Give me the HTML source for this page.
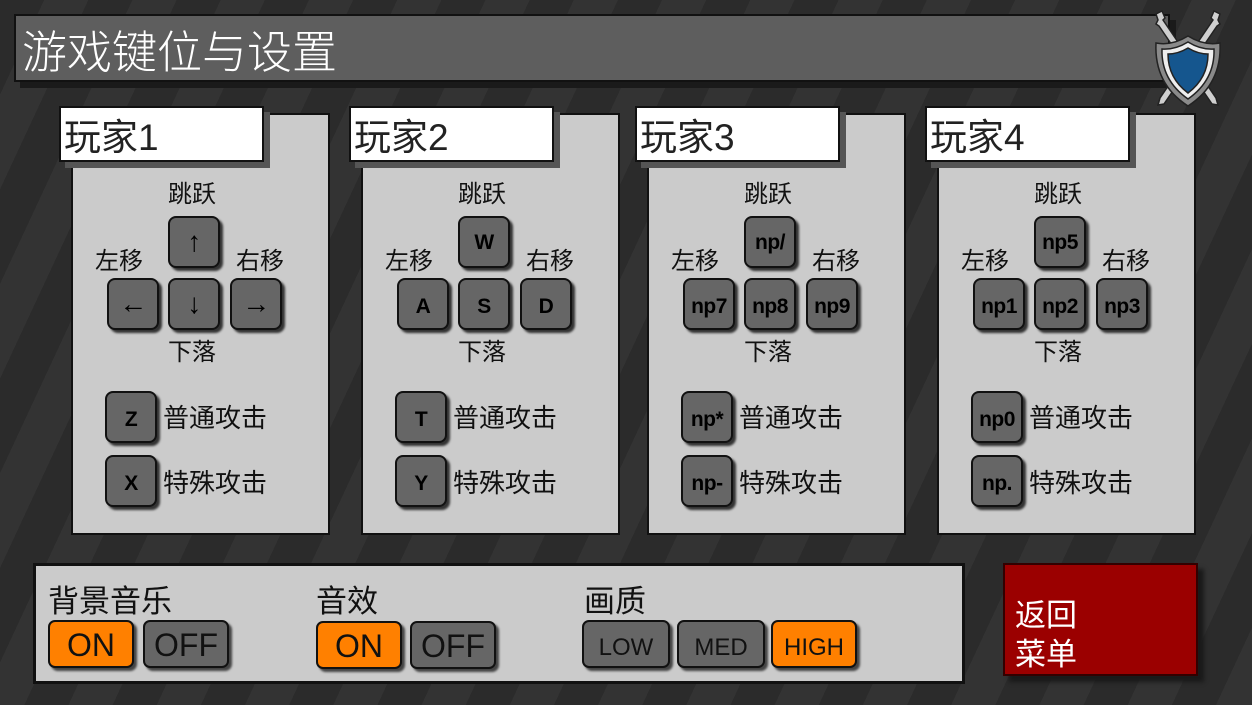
<!DOCTYPE html>
<html><head><meta charset="utf-8"><style>
*{margin:0;padding:0;box-sizing:border-box}
body{width:1252px;height:705px;overflow:hidden;position:relative;font-family:"Liberation Sans","Noto Sans CJK SC",sans-serif;
background:repeating-linear-gradient(115deg,#2b2b2b 0 40px,#333 40px 80px);}
.a{position:absolute}
.title{left:14px;top:14px;width:1156px;height:68px;background:#5e5e5e;border:2px solid #111;box-shadow:6px 6px 0 #1a1a1a;color:#fff;font-size:45px;line-height:74px;padding-left:6px;font-weight:300}
.pw{position:absolute;top:0;left:0;width:400px;height:560px}
.panel{left:71px;top:113px;width:259px;height:422px;background:#cbcbcb;border:2px solid #111}
.lbl{left:59px;top:106px;width:205px;height:56px;background:#fff;border:2px solid #111;box-shadow:6px 6px 0 #555;font-size:37px;line-height:60px;padding-left:3px;color:#222}
.t{font-size:24px;color:#111;line-height:26px}
.k{width:52px;height:52px;background:#666;border:2px solid #111;border-radius:8px;box-shadow:3px 3px 2px #333;font-weight:bold;font-size:21px;color:#000;text-align:center;line-height:54px;letter-spacing:-0.5px;white-space:nowrap;overflow:hidden}
.ar{font-size:28px;line-height:48px}
.bot{left:33px;top:563px;width:932px;height:121px;background:#cbcbcb;border:3px solid #111}
.b{height:48px;border:2px solid #111;border-radius:7px;box-shadow:3px 3px 2px #444;text-align:center;font-size:32px;line-height:46px;color:#111}
.on{background:#ff8000}.off{background:#666}
.s{font-size:26px;line-height:28px}
</style></head><body>
<div class="a title">游戏键位与设置</div>
<svg class="a" style="left:1146px;top:6px" width="84" height="104" viewBox="0 0 84 104">
<g stroke="#222" stroke-width="1.5">
<path d="M10 8 L16 5 L19 12 L17 14 L70 92 L72 99 L66 98 L13 20 L10 18 L12 14Z" fill="#cfcfcf"/>
<path d="M74 8 L68 5 L65 12 L67 14 L14 92 L12 99 L18 98 L71 20 L74 18 L72 14Z" fill="#cfcfcf"/>
<path d="M42 30 Q58 40 74 37 Q76 78 42 100 Q8 78 10 37 Q26 40 42 30Z" fill="#8a8a8a"/>
<path d="M42 36 Q55 44 68 43 Q69 74 42 93 Q15 74 16 43 Q29 44 42 36Z" fill="#eee"/>
<path d="M42 42 Q52 48 62 48 Q62 72 42 87 Q22 72 22 48 Q32 48 42 42Z" fill="#15568e"/>
</g></svg>

<div class="pw" style="left:0">
<div class="a panel"></div><div class="a lbl">玩家1</div>
<div class="a t" style="left:168px;top:182px">跳跃</div>
<div class="a t" style="left:95px;top:249px">左移</div>
<div class="a t" style="left:236px;top:249px">右移</div>
<div class="a t" style="left:168px;top:340px">下落</div>
<div class="a k ar" style="left:168px;top:216px">↑</div>
<div class="a k ar" style="left:107px;top:278px">←</div>
<div class="a k ar" style="left:168px;top:278px">↓</div>
<div class="a k ar" style="left:230px;top:278px">→</div>
<div class="a k" style="left:105px;top:391px">Z</div>
<div class="a k" style="left:105px;top:455px">X</div>
<div class="a t s" style="left:163px;top:404px">普通攻击</div>
<div class="a t s" style="left:163px;top:469px">特殊攻击</div>
</div>
<div class="pw" style="left:290px">
<div class="a panel"></div><div class="a lbl">玩家2</div>
<div class="a t" style="left:168px;top:182px">跳跃</div>
<div class="a t" style="left:95px;top:249px">左移</div>
<div class="a t" style="left:236px;top:249px">右移</div>
<div class="a t" style="left:168px;top:340px">下落</div>
<div class="a k" style="left:168px;top:216px;line-height:50px">W</div>
<div class="a k" style="left:107px;top:278px">A</div>
<div class="a k" style="left:168px;top:278px">S</div>
<div class="a k" style="left:230px;top:278px">D</div>
<div class="a k" style="left:105px;top:391px">T</div>
<div class="a k" style="left:105px;top:455px">Y</div>
<div class="a t s" style="left:163px;top:404px">普通攻击</div>
<div class="a t s" style="left:163px;top:469px">特殊攻击</div>
</div>
<div class="pw" style="left:576px">
<div class="a panel"></div><div class="a lbl">玩家3</div>
<div class="a t" style="left:168px;top:182px">跳跃</div>
<div class="a t" style="left:95px;top:249px">左移</div>
<div class="a t" style="left:236px;top:249px">右移</div>
<div class="a t" style="left:168px;top:340px">下落</div>
<div class="a k" style="left:168px;top:216px;line-height:50px">np/</div>
<div class="a k" style="left:107px;top:278px">np7</div>
<div class="a k" style="left:168px;top:278px">np8</div>
<div class="a k" style="left:230px;top:278px">np9</div>
<div class="a k" style="left:105px;top:391px">np*</div>
<div class="a k" style="left:105px;top:455px">np-</div>
<div class="a t s" style="left:163px;top:404px">普通攻击</div>
<div class="a t s" style="left:163px;top:469px">特殊攻击</div>
</div>
<div class="pw" style="left:866px">
<div class="a panel"></div><div class="a lbl">玩家4</div>
<div class="a t" style="left:168px;top:182px">跳跃</div>
<div class="a t" style="left:95px;top:249px">左移</div>
<div class="a t" style="left:236px;top:249px">右移</div>
<div class="a t" style="left:168px;top:340px">下落</div>
<div class="a k" style="left:168px;top:216px;line-height:50px">np5</div>
<div class="a k" style="left:107px;top:278px">np1</div>
<div class="a k" style="left:168px;top:278px">np2</div>
<div class="a k" style="left:230px;top:278px">np3</div>
<div class="a k" style="left:105px;top:391px">np0</div>
<div class="a k" style="left:105px;top:455px">np.</div>
<div class="a t s" style="left:163px;top:404px">普通攻击</div>
<div class="a t s" style="left:163px;top:469px">特殊攻击</div>
</div>

<div class="a bot"></div>
<div class="a t" style="left:48px;top:585px;font-size:31px;line-height:34px">背景音乐</div>
<div class="a t" style="left:316px;top:585px;font-size:31px;line-height:34px">音效</div>
<div class="a t" style="left:584px;top:585px;font-size:31px;line-height:34px">画质</div>
<div class="a b on" style="left:48px;top:620px;width:86px">ON</div>
<div class="a b off" style="left:143px;top:620px;width:86px">OFF</div>
<div class="a b on" style="left:316px;top:621px;width:86px">ON</div>
<div class="a b off" style="left:410px;top:621px;width:86px">OFF</div>
<div class="a b off" style="left:582px;top:620px;width:88px;font-size:24px;line-height:52px">LOW</div>
<div class="a b off" style="left:677px;top:620px;width:88px;font-size:24px;line-height:52px">MED</div>
<div class="a b on" style="left:771px;top:620px;width:86px;font-size:24px;line-height:52px">HIGH</div>
<div class="a" style="left:1003px;top:563px;width:195px;height:113px;background:#9b0000;border:2px solid #300;box-shadow:6px 6px 4px #1a1a1a;color:#fff;font-size:31px;line-height:39px;padding:31px 0 0 10px">返回<br>菜单</div>
</body></html>
